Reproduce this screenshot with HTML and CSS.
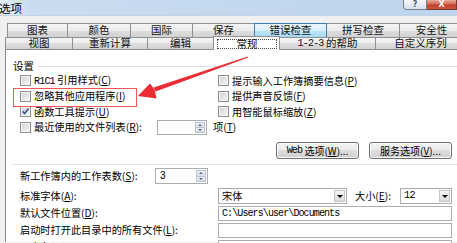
FILE: index.html
```html
<!DOCTYPE html>
<html lang="zh-CN">
<head>
<meta charset="utf-8">
<title>选项</title>
<link rel="stylesheet" href="styles.css">
</head>
<body>
<div class="window">
  <div class="titlebar">
    <span class="title">选项</span>
    <div class="caption">
      <span class="cap-btn help">?</span>
      <span class="cap-btn close">X</span>
    </div>
  </div>
  <div class="client">
    <div class="tabrow row1">
      <span class="tab">图表</span>
      <span class="tab">颜色</span>
      <span class="tab">国际</span>
      <span class="tab">保存</span>
      <span class="tab hot">错误检查</span>
      <span class="tab">拼写检查</span>
      <span class="tab">安全性</span>
    </div>
    <div class="tabrow row2">
      <span class="tab">视图</span>
      <span class="tab">重新计算</span>
      <span class="tab">编辑</span>
      <span class="tab sel"><span class="focus">常规</span></span>
      <span class="tab"><span class="asc">1-2-3</span>&nbsp;的帮助</span>
      <span class="tab">自定义序列</span>
    </div>
    <div class="panel">
      <div class="group-head"><span class="gtitle">设置</span><i class="rule"></i></div>
      <div class="settings">
        <div class="col left">
          <div class="row"><span class="cb"></span><span class="lbl"><span class="asc">R1C1</span> 引用样式(<u>C</u>)</span></div>
          <div class="row"><span class="cb"></span><span class="lbl">忽略其他应用程序(<u>I</u>)</span></div>
          <div class="row"><span class="cb checked"><svg viewBox="0 0 9 9" width="9" height="9"><path d="M1.6 4.4 L3.6 6.6 L7.6 1.6" fill="none" stroke="#3f5a8c" stroke-width="1.6"/></svg></span><span class="lbl">函数工具提示(<u>U</u>)</span></div>
          <div class="row"><span class="cb"></span><span class="lbl recent">最近使用的文件列表(<u>R</u>):</span>
            <span class="spin small"><span class="val"></span><span class="arrows"><i class="up"></i><i class="down"></i></span></span>
            <span class="unit">项(<u>T</u>)</span>
          </div>
        </div>
        <div class="col right">
          <div class="row"><span class="cb"></span><span class="lbl">提示输入工作簿摘要信息(<u>P</u>)</span></div>
          <div class="row"><span class="cb"></span><span class="lbl">提供声音反馈(<u>F</u>)</span></div>
          <div class="row"><span class="cb"></span><span class="lbl">用智能鼠标缩放(<u>Z</u>)</span></div>
        </div>
      </div>
      <div class="btnrow">
        <button class="btn"><span class="asc">Web</span>&nbsp;选项(<u>W</u>)...</button>
        <button class="btn">服务选项(<u>V</u>)...</button>
      </div>
      <div class="sep"></div>
      <div class="frow first">
        <span class="flabel short">新工作簿内的工作表数(<u>S</u>):</span>
        <span class="spin sheets"><span class="val">3</span><span class="arrows"><i class="up"></i><i class="down"></i></span></span>
      </div>
      <div class="frow second">
        <span class="flabel">标准字体(<u>A</u>):</span>
        <span class="select fontsel"><span class="val">宋体</span><span class="drop"><i></i></span></span>
        <span class="sizelabel">大小(<u>E</u>):</span>
        <span class="select sizesel"><span class="val">12</span><span class="drop"><i></i></span></span>
      </div>
      <div class="frow">
        <span class="flabel">默认文件位置(<u>D</u>):</span>
        <span class="input"><span class="path">C:\Users\user\Documents</span></span>
      </div>
      <div class="frow">
        <span class="flabel">启动时打开此目录中的所有文件(<u>L</u>):</span>
        <span class="input"></span>
      </div>
      <div class="frow">
        <span class="flabel">用户名(<u>N</u>):</span>
        <span class="input"></span>
      </div>
    </div>
  </div>
  <svg class="annot" width="457" height="243" viewBox="0 0 457 243">
    <rect x="13.5" y="88.5" width="123" height="18" fill="none" stroke="#f0585a" stroke-width="1"/>
    <polygon points="247.8,56.4 248.3,57.5 155.6,91.4 153.6,87.4" fill="#ec2c33"/>
    <polygon points="138,96 150,83.5 154.5,89.5 156.5,98.5" fill="#ec2c33"/>
  </svg>
</div>
</body>
</html>
```

FILE: styles.css
```css
* { box-sizing: border-box; }
html, body { margin: 0; padding: 0; }
body {
  width: 457px;
  height: 243px;
  overflow: hidden;
  background: #f0f0f0;
  font-family: "Noto Sans CJK SC", "Noto Sans", sans-serif;
  font-size: 10px;
  line-height: 1;
  color: #000;
}
u { text-decoration: underline; text-underline-offset: 1px; }

.window { position: relative; width: 457px; height: 243px; overflow: hidden; }

/* title bar */
.titlebar {
  height: 16px;
  display: flex;
  justify-content: space-between;
  background: linear-gradient(90deg, #e3edf8 0, #cadcf0 30px, #bdd4ec 100%);
  border-bottom: 1px solid #c3d3e4;
}
.title { font-size: 11.5px; line-height: 16px; padding-left: 0; margin-left: -1px; color: #000; }
.caption { display: flex; align-self: flex-start; }
.cap-btn {
  height: 10px;
  display: flex;
  align-items: center;
  justify-content: center;
  font-size: 8px;
  font-family: "DejaVu Sans", sans-serif;
  font-weight: bold;
}
.help {
  width: 24px;
  background: linear-gradient(#f4f6f9, #dae1ea);
  border: 1px solid #737f90;
  border-top: none;
  border-radius: 0 0 0 4px;
  color: #4b5a70;
}
.close {
  width: 30px;
  background: linear-gradient(#e9a999, #d26a55 45%, #c2402b 55%, #c9543c);
  border: 1px solid #7b3a30;
  border-top: none;
  border-left: none;
  color: #fff;
}

/* tabs */
.client { padding-top: 7px; }
.tabrow { display: flex; white-space: nowrap; align-items: flex-start; }
.row1 { margin-left: 7px; height: 14px; }
.row2 { margin-left: 5px; height: 12px; }
.tab {
  flex: none;
  height: 100%;
  display: flex;
  align-items: center;
  justify-content: center;
  border-top: 1px solid #8e9096;
  border-left: 1px solid #8e9096;
  background: linear-gradient(#f4f4f4, #ececec 50%, #dedede 50%, #d2d2d2);
  font-size: 10.5px;
  color: #111;
}
.row1 .tab:nth-child(1) { width: 60px; }
.row1 .tab:nth-child(2) { width: 63px; }
.row1 .tab:nth-child(3) { width: 62px; }
.row1 .tab:nth-child(4) { width: 62px; }
.row1 .tab:nth-child(5) { width: 73px; }
.row1 .tab:nth-child(6) { width: 72px; }
.row1 .tab:nth-child(7) { width: 64px; }
.row2 .tab:nth-child(1) { width: 67px; }
.row2 .tab:nth-child(2) { width: 75px; }
.row2 .tab:nth-child(3) { width: 66px; }
.row2 .tab:nth-child(4) { width: 67px; }
.row2 .tab:nth-child(5) { width: 95px; }
.row2 .tab:nth-child(6) { width: 90px; }
.tab.hot {
  background: linear-gradient(#eaf6fd, #d9f0fc 50%, #bee6fd 50%, #a7d9f5);
  border-top-color: #3c7fb1;
  border-left-color: #3c7fb1;
  border-right: 1px solid #3c7fb1;
}
.tab.hot + .tab { border-left: none; }
.tab.sel {
  position: relative;
  z-index: 1;
  height: 14px;
  margin-top: -1px;
  background: #fff;
  border-right: 1px solid #8e9096;
  padding: 2px 2px 1px 3px;
}
.tab.sel + .tab { border-left: none; }
.focus {
  flex: 1;
  height: 100%;
  display: flex;
  align-items: center;
  justify-content: center;
  border: 1px dotted #444;
}
.asc {
  font-family: "Liberation Mono", monospace;
  font-size: 10px;
  letter-spacing: -0.8px;
}

/* panel */
.panel {
  background: #fff;
  border-top: 1px solid #898c95;
  border-left: 1px solid #898c95;
  margin-left: 5px;
  padding: 0 5px 0 7px;
  height: 193px;
}
.group-head { display: flex; align-items: center; height: 12px; margin-top: 10px; }
.gtitle { font-size: 10.5px; }
.rule { flex: 1; height: 1px; background: #d9e1e8; margin-left: 4px; margin-right: -5px; }

.settings { display: flex; margin-top: 1px; padding-left: 7px; }
.col.left { width: 198px; flex: none; }
.row { display: flex; align-items: center; height: 15.5px; white-space: nowrap; }
.cb {
  flex: none;
  width: 11px;
  height: 11px;
  margin-right: 3px;
  border: 1px solid #8e8f8f;
  background: linear-gradient(135deg, #cdd1d7, #f7f7f7);
  box-shadow: inset 0 0 0 1px #f4f4f4;
  display: flex;
  align-items: center;
  justify-content: center;
}
.cb svg { display: block; }
.lbl { font-size: 10.2px; }
.lbl.recent { width: 123px; flex: none; }
.unit { margin-left: 6px; font-size: 10.2px; }

.spin {
  flex: none;
  display: flex;
  border: 1px solid #abadb3;
  background: #fff;
}
.spin.small { width: 50px; height: 15px; }
.spin.sheets { width: 53px; height: 16px; }
.spin .val { flex: 1; padding-left: 4px; display: flex; align-items: center; font-family: "Liberation Sans", sans-serif; font-size: 10px; }
.arrows { width: 10px; display: flex; flex-direction: column; margin: 1px 1px 1px 0; }
.arrows i {
  flex: 1;
  display: flex;
  align-items: center;
  justify-content: center;
  background: linear-gradient(#f1f3f6, #d9dfe7);
  border: 1px solid #b9c2cd;
}
.arrows i + i { border-top: none; }
.arrows .up::after {
  content: "";
  border-left: 2px solid transparent;
  border-right: 2px solid transparent;
  border-bottom: 2px solid #4d6a8c;
}
.arrows .down::after {
  content: "";
  border-left: 2px solid transparent;
  border-right: 2px solid transparent;
  border-top: 2px solid #4d6a8c;
}

/* buttons */
.btnrow { display: flex; justify-content: flex-end; gap: 10px; margin-top: 7px; }
.btn {
  width: 83px;
  height: 17px;
  padding: 0;
  margin: 0;
  border: 1px solid #707070;
  border-radius: 3px;
  background: linear-gradient(#f2f2f2, #ebebeb 50%, #dddddd 50%, #cfcfcf);
  box-shadow: inset 0 0 0 1px #fbfbfb;
  font-family: inherit;
  font-size: 10px;
  color: #000;
  display: flex;
  align-items: center;
  justify-content: center;
  white-space: nowrap;
}
.sep { height: 1px; background: #dfe4ea; margin: 5px -5px 0 0; }

/* lower fields */
.frow { display: flex; align-items: center; padding-left: 7px; margin-top: 2px; white-space: nowrap; }
.frow.first { margin-top: 3px; }
.frow.second { margin-top: 4px; }
.flabel { width: 198px; flex: none; font-size: 10.2px; }
.flabel.short { width: 135px; }
.select {
  flex: none;
  display: flex;
  height: 16px;
  border: 1px solid #a9abb1;
  background: #fff;
}
.fontsel { width: 129px; }
.sizesel { width: 52px; margin-left: 2px; }
.select .val { flex: 1; display: flex; align-items: center; padding-left: 3px; font-size: 10.2px; }
.sizesel .val { font-family: "Liberation Mono", monospace; letter-spacing: -0.5px; }
.drop {
  width: 11px;
  margin: 1px;
  border: 1px solid #c4c4c4;
  background: linear-gradient(#f5f5f5, #dcdcdc);
  display: flex;
  align-items: center;
  justify-content: center;
}
.drop i {
  border-left: 3px solid transparent;
  border-right: 3px solid transparent;
  border-top: 3px solid #000;
}
.sizelabel { margin-left: 8px; width: 43px; font-size: 10.2px; }
.input {
  flex: 1;
  height: 15px;
  border: 1px solid #abadb3;
  background: #fff;
  display: flex;
  align-items: center;
  padding-left: 3px;
}
.path {
  font-family: "Liberation Mono", monospace;
  font-size: 10px;
  letter-spacing: -0.9px;
}

.annot { position: absolute; left: 0; top: 0; pointer-events: none; }
```
